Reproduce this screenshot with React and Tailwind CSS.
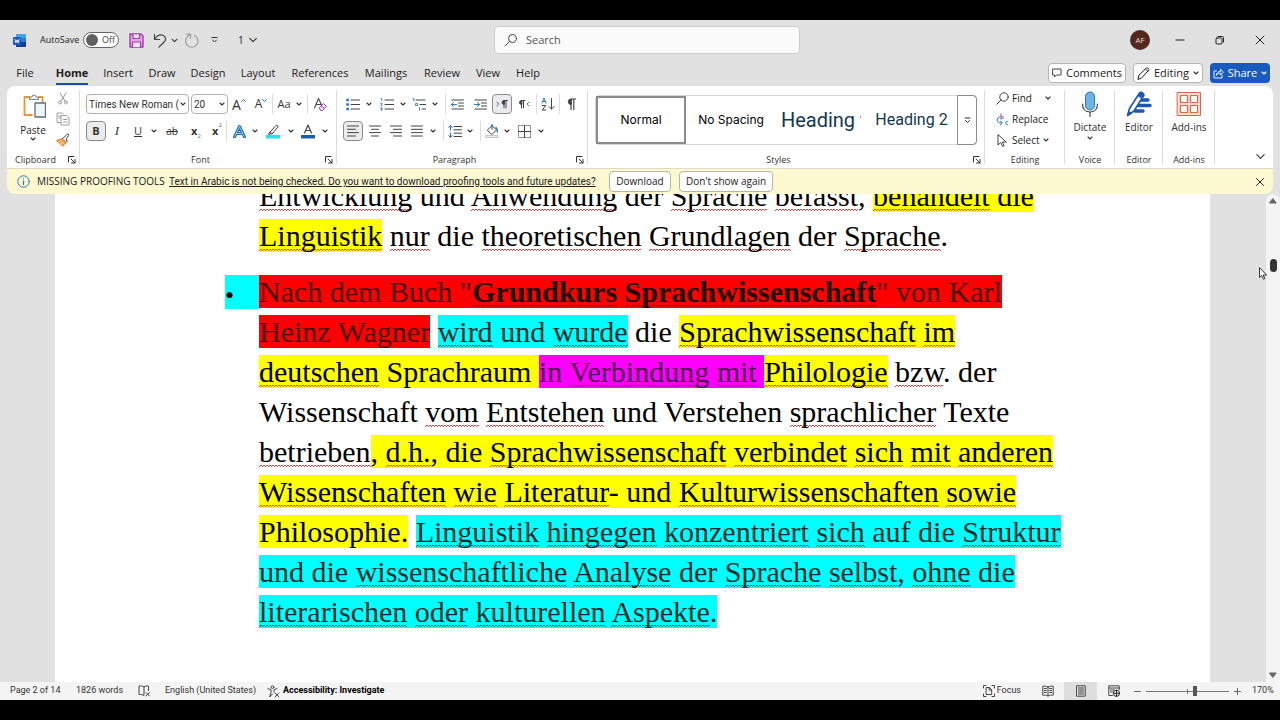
import React from "react";

function Svg({ w = 16, h = w, box, className = "", children }) {
  return (
    <svg
      width={w}
      height={h}
      viewBox={box || `0 0 ${w} ${h}`}
      fill="none"
      stroke="#444"
      strokeWidth="1"
      strokeLinecap="round"
      strokeLinejoin="round"
      aria-hidden="true"
      className={`shrink-0 ${className}`}
    >
      {children}
    </svg>
  );
}

const Chevron = ({ w = 6, color = "#333" }) => (
  <Svg w={w} h={w} box="0 0 6 6">
    <path d="M1 2l2 2 2-2" stroke={color} strokeWidth="1.1" vectorEffect="non-scaling-stroke" />
  </Svg>
);

function Tool({ label, w, on, children }) {
  return (
    <button
      type="button"
      aria-label={label}
      className={`flex h-5 shrink-0 items-center justify-center rounded ${w} ${
        on ? "border border-[#8a8a8a] bg-[#ececec]" : ""
      }`}
    >
      {children}
    </button>
  );
}

const More = ({ label, w }) => (
  <Tool label={label} w={w}>
    <Chevron />
  </Tool>
);

const Rule = () => <span className="h-5 w-px shrink-0 bg-[#dcdcdc]" />;

const Launcher = ({ label }) => (
  <button type="button" aria-label={label} className="absolute right-1 bottom-1">
    <Svg w={8}>
      <path d="M.5 6V.5H6M3 3l4 4M7 3.500V7H3.500" stroke="#333" />
    </Svg>
  </button>
);

function Group({ label, w, launcher, children }) {
  return (
    <section
      aria-label={label}
      className={`relative flex flex-col justify-between pt-2 after:absolute after:right-0 after:top-1 after:h-[74px] after:w-px after:bg-[#dcdcdc] ${w}`}
    >
      {children}
      <span className={`h-4 text-center text-[9px] leading-4 text-[#333] ${launcher ? "pr-4" : ""}`}>{label}</span>
      {launcher && <Launcher label={`${label} settings`} />}
    </section>
  );
}

/* ---------- Title bar ---------- */

function TitleBar() {
  return (
    <header className="grid h-10 shrink-0 grid-cols-[494fr_306fr_480fr] items-center">
      <div className="flex items-center pl-3 text-[9px]">
        <Svg w={15}>
          <rect x="4" y="1" width="10" height="13" rx="1" fill="#2b7cd3" stroke="none" />
          <rect x="4" y="1" width="10" height="4" rx="1" fill="#41a5ee" stroke="none" />
          <path d="M4 9h10v4a1 1 0 0 1-1 1H4z" fill="#103f91" stroke="none" />
          <rect x="1" y="4" width="8" height="8" rx="1" fill="#185abd" stroke="none" />
          <path d="M2.800 6.300l1 3.600 1.200-3 1.200 3 1-3.600" stroke="#fff" strokeWidth=".9" />
        </Svg>
        <label htmlFor="autosave" className="ml-[13px] w-[43px]">
          AutoSave
        </label>
        <span className="relative flex h-4 w-9 items-center rounded-full border border-[#666] bg-white">
          <input id="autosave" type="checkbox" className="absolute inset-0 appearance-none" />
          <span className="ml-[2px] size-3 rounded-full bg-[#616161]" />
          <span className="ml-1 text-[9px] text-[#444]">Off</span>
        </span>
        <button type="button" aria-label="Save" className="ml-[10px]">
          <Svg w={15}>
            <path d="M1 1h11l2 2v11H1z" fill="#e3a5e3" stroke="#a33ba8" strokeWidth="1.400" />
            <path d="M4 1.500v4h6.500v-4M3.500 14V9h8v5" fill="#f2e6f2" stroke="#a33ba8" strokeWidth="1.200" />
          </Svg>
        </button>
        <button type="button" aria-label="Undo" className="ml-[9px]">
          <Svg w={15}>
            <path d="M1.500 1.500v5h5M1.700 6.300C4 2.500 7 1.300 9.800 2.300c3 1 3.600 4.500 1.400 6.700L6 14" strokeWidth="1.200" />
          </Svg>
        </button>
        <button type="button" aria-label="Undo list" className="ml-[3px]">
          <Chevron w={7} />
        </button>
        <button type="button" aria-label="Repeat" className="ml-[6px]">
          <Svg w={15}>
            <path d="M2.500 1.200h4v4M6.300 1.500L4.200 3A6.200 6.200 0 1 0 10.500 2.500" stroke="#a0a0a0" strokeWidth="1.200" />
          </Svg>
        </button>
        <button type="button" aria-label="Customize Quick Access Toolbar" className="ml-3">
          <Svg w={7} h={8}>
            <path d="M1 1.500h5M1.500 4l2 2 2-2" stroke="#333" />
          </Svg>
        </button>
        <button type="button" className="ml-5 flex items-center gap-1 text-[10px]">
          1 <Chevron w={10} />
        </button>
      </div>

      <label className="flex h-7 items-center gap-2 rounded border border-[#cdcdcd] bg-[#fafafa] px-2">
        <Svg w={15}>
          <circle cx="9.500" cy="5.500" r="4" />
          <path d="M6.600 8.400L2 13" />
        </Svg>
        <input
          type="search"
          aria-label="Search"
          placeholder="Search"
          className="w-full min-w-0 bg-transparent text-[11px] outline-none placeholder:text-[#555]"
        />
      </label>

      <div className="flex items-center justify-end pr-[10px]">
        <button
          type="button"
          className="flex size-5 items-center justify-center rounded-full bg-[#54291d] text-[8px] text-[#e9d9d4]"
        >
          AF
        </button>
        <button type="button" aria-label="Minimize" className="ml-5 flex w-5 justify-center">
          <Svg w={10}>
            <path d="M1 5h8" stroke="#222" />
          </Svg>
        </button>
        <button type="button" aria-label="Restore" className="ml-5 flex w-5 justify-center">
          <Svg w={10}>
            <rect x="1" y="3" width="6" height="6" rx="1" stroke="#222" />
            <path d="M3 1.500h4.500a1 1 0 0 1 1 1V7" stroke="#222" />
          </Svg>
        </button>
        <button type="button" aria-label="Close" className="ml-5 flex w-5 justify-center">
          <Svg w={10}>
            <path d="M1 1l8 8M9 1L1 9" stroke="#222" />
          </Svg>
        </button>
      </div>
    </header>
  );
}

/* ---------- Tabs ---------- */

const TABS = [
  ["File", "w-[18px] mr-[6px]"],
  ["Home", "w-8"],
  ["Insert", "w-7"],
  ["Draw", "w-7"],
  ["Design", "w-8"],
  ["Layout", "w-9"],
  ["References", "w-14"],
  ["Mailings", "w-11"],
  ["Review", "w-9"],
  ["View", "w-6"],
  ["Help", "w-6"],
];

function TabRow() {
  return (
    <div className="flex h-[26px] shrink-0 items-center justify-between pr-[10px] pl-4 text-[11px]">
      <nav className="flex gap-4">
        {TABS.map(([name, w]) => (
          <a
            key={name}
            href="#"
            className={`flex justify-center border-b-2 pt-px leading-5 whitespace-nowrap ${w} ${
              name === "Home" ? "border-[#1c4ea1] font-bold" : "border-transparent"
            }`}
          >
            {name}
          </a>
        ))}
      </nav>
      <div className="flex gap-[7px]">
        <button type="button" className="flex h-5 w-[78px] items-center justify-center gap-1 rounded border border-[#b5b5b5] bg-white">
          <Svg w={10}>
            <path d="M1 1h8v6H4.500L2.500 9V7H1z" />
          </Svg>
          Comments
        </button>
        <button type="button" className="flex h-5 w-[70px] items-center justify-center gap-1 rounded border border-[#b5b5b5] bg-white">
          <Svg w={13}>
            <path d="M1 12l1-4 7.500-7c1-.7 3 1 2.300 2.200L4.500 11zM8.500 2l2.500 2.500" stroke="#222" />
          </Svg>
          Editing
          <Chevron />
        </button>
        <button type="button" className="flex h-5 w-[60px] items-center justify-center gap-1 rounded bg-[#185abd] text-white">
          <Svg w={11}>
            <path d="M3.500 3H1v7h8V7.500M3.500 7c.3-2.500 2-3.600 4-3.600V1.200L10.300 4.200 7.500 7V5C6 5 4.500 5.500 3.500 7z" stroke="#fff" strokeWidth=".9" />
          </Svg>
          Share
          <Chevron color="#fff" />
        </button>
      </div>
    </div>
  );
}

/* ---------- Ribbon groups ---------- */

function Clipboard() {
  return (
    <Group label="Clipboard" w="w-[73px]" launcher>
      <div className="flex pl-[10px]">
        <button type="button" className="flex w-8 flex-col items-center text-[10px] leading-3">
          <Svg w={26}>
            <path d="M9 3H4.500v18H12M19 3h3.500v5" stroke="#e8972e" strokeWidth="1.800" />
            <path d="M9.500 5V3H12a2 2 0 0 1 4 0h2.500v2z" fill="#fff" stroke="#777" />
            <rect x="15" y="9" width="10.500" height="14" fill="#f2f5f7" stroke="#5f6f7a" strokeWidth="1.300" />
          </Svg>
          <span className="mt-1">Paste</span>
          <Chevron />
        </button>
        <div className="flex w-7 flex-col items-center gap-[7px]">
          <button type="button" aria-label="Cut" className="-mt-[2px]">
            <Svg w={12} h={13}>
              <path d="M3 .8l5 8.500M9 .8L4 9.300" stroke="#9a9a9a" />
              <circle cx="3" cy="10.500" r="1.500" stroke="#9a9a9a" />
              <circle cx="9" cy="10.500" r="1.500" stroke="#9a9a9a" />
            </Svg>
          </button>
          <button type="button" aria-label="Copy">
            <Svg w={14}>
              <path d="M5 10.500H1V1h5.500l1 1M2.500 4H5M2.500 6H5" stroke="#a0a0a0" />
              <path d="M5.500 3.500h5L13 6v7H5.500zM7.500 7.500h3.500M7.500 10h3.500" stroke="#a0a0a0" fill="#fff" />
            </Svg>
          </button>
          <button type="button" aria-label="Format Painter">
            <Svg w={14}>
              <path d="M1 7.500l6-2 3.500 3.800L7 13z" fill="#f09a3a" stroke="#d87f1e" />
              <path d="M6.500 5.500l2-1.500L11 1.200c1-.8 2.200.3 1.600 1.300L10.500 5.500l.5 3" fill="#fff" />
              <path d="M3 8.500l3 3M5 7.500l3 3.500" stroke="#fff" strokeWidth=".7" />
            </Svg>
          </button>
        </div>
      </div>
    </Group>
  );
}

function Combo({ id, label, value, w }) {
  return (
    <span className={`flex h-5 shrink-0 items-center rounded border border-[#b0b0b0] bg-white pr-[2px] ${w}`}>
      <input
        id={id}
        aria-label={label}
        defaultValue={value}
        className="min-w-0 flex-1 bg-transparent pl-[2px] font-[Roboto,sans-serif] text-[10px] text-[#333] outline-none"
      />
      <button type="button" aria-label={`${label} list`}>
        <Chevron />
      </button>
    </span>
  );
}

function FontGroup() {
  return (
    <Group label="Font" w="w-[257px]" launcher>
      <div className="flex flex-col gap-[7px] pl-[6px] text-[#333]">
        <div className="flex items-center">
          <Combo id="font" label="Font name" value="Times New Roman (" w="mr-[2px] w-[103px]" />
          <Combo id="size" label="Font size" value="20" w="w-[37px]" />
          <Tool label="Increase Font Size" w="w-[22px]">
            <span className="text-[14px]">A</span>
            <Svg w={5} h={10}>
              <path d="M.5 2.500l2-2 2 2" stroke="#2a7ab8" />
            </Svg>
          </Tool>
          <Tool label="Decrease Font Size" w="w-[22px]">
            <span className="text-[12px]">A</span>
            <Svg w={5} h={10}>
              <path d="M.5 .5l2 2 2-2" stroke="#2a7ab8" />
            </Svg>
          </Tool>
          <Rule />
          <Tool label="Change Case" w="w-[22px]">
            <span className="text-[11px]">Aa</span>
          </Tool>
          <span className="mr-1 flex">
            <More label="Change Case list" w="w-2" />
          </span>
          <Rule />
          <Tool label="Clear All Formatting" w="w-6">
            <Svg w={15}>
              <path d="M1.500 11L5.500 1.500 8.500 8M3 7.500h4.500" strokeWidth="1.100" />
              <path d="M6.500 10.500l4-4 3 3-4 4h-1.500z" fill="#f4e4fa" stroke="#9b45b8" />
              <path d="M8.300 8.600l3 3" stroke="#9b45b8" />
            </Svg>
          </Tool>
        </div>
        <div className="flex items-center">
          <Tool label="Bold" w="w-5" on>
            <span className="text-[11px] font-bold">B</span>
          </Tool>
          <Tool label="Italic" w="w-[22px]">
            <span className="font-['Liberation_Serif',serif] text-[13px] italic">I</span>
          </Tool>
          <Tool label="Underline" w="w-5">
            <span className="text-[11px] underline">U</span>
          </Tool>
          <More label="Underline list" w="w-3" />
          <Tool label="Strikethrough" w="w-6">
            <span className="text-[10px] line-through">ab</span>
          </Tool>
          <Tool label="Subscript" w="w-6">
            <span className="text-[11px] font-bold">x</span>
            <span className="self-end text-[6px] text-[#2a7ab8]">2</span>
          </Tool>
          <Tool label="Superscript" w="w-[18px]">
            <span className="text-[11px] font-bold">x</span>
            <span className="self-start text-[6px] text-[#2a7ab8]">2</span>
          </Tool>
          <Rule />
          <Tool label="Text Effects" w="w-6">
            <Svg w={13}>
              <path d="M1.500 12L6.500 1.500 11.500 12M3.500 8.500h6" stroke="#1f6fb5" strokeWidth="3" />
              <path d="M1.500 12L6.500 1.500 11.500 12M3.500 8.500h6" stroke="#b9dcf2" strokeWidth=".8" />
            </Svg>
          </Tool>
          <More label="Text Effects list" w="w-2" />
          <Tool label="Text Highlight Color" w="w-7">
            <Svg w={14} h={15}>
              <path d="M4 8l6-6.500c1-.8 2.500.5 1.800 1.600L6.500 9.500zM4 8l-1.500 2.500 4-1" />
              <rect x="0" y="11" width="14" height="3.500" fill="#2fe0e0" stroke="none" />
            </Svg>
          </Tool>
          <More label="Highlight list" w="w-2" />
          <Tool label="Font Color" w="w-[26px]">
            <Svg w={14} h={15}>
              <path d="M3.500 9L7 1l3.500 8M4.700 6.500h4.600" strokeWidth="1.200" />
              <rect x="0" y="11" width="14" height="3.500" fill="#1a5fa8" stroke="none" />
            </Svg>
          </Tool>
          <More label="Font Color list" w="w-2" />
        </div>
      </div>
    </Group>
  );
}

const B = "#2a7ab8";

function ParagraphGroup() {
  return (
    <Group label="Paragraph" w="w-[251px]" launcher>
      <div className="flex flex-col gap-[7px] pl-[6px]">
        <div className="flex items-center">
          <Tool label="Bullets" w="w-5">
            <Svg w={14} h={13}>
              <path d="M5 2h9M5 6.500h9M5 11h9" />
              <path d="M1.500 2h.1M1.500 6.500h.1M1.500 11h.1" stroke={B} strokeWidth="2.600" strokeLinecap="square" />
            </Svg>
          </Tool>
          <More label="Bullets list" w="w-3" />
          <Tool label="Numbering" w="w-6">
            <Svg w={14} h={13}>
              <path d="M5 2h9M5 6.500h9M5 11h9" />
              <path d="M1 .5h.8v2.500M.8 5.500h1.400L.8 7.500h1.400M.8 9.800h1.300v2.400H.8M1 11h1" stroke={B} strokeWidth=".8" />
            </Svg>
          </Tool>
          <More label="Numbering list" w="w-2" />
          <Tool label="Multilevel List" w="w-6">
            <Svg w={14} h={13}>
              <path d="M4 2h9M8 6.500h6M10 11h4" />
              <path d="M1 .5h.8v2.500M4 5.500h1.500v2H4zM7.500 9.800v2.500" stroke={B} strokeWidth=".9" />
            </Svg>
          </Tool>
          <span className="mr-[6px] flex">
            <More label="Multilevel list options" w="w-2" />
          </span>
          <Rule />
          <Tool label="Decrease Indent" w="w-[22px]">
            <Svg w={13} h={13}>
              <path d="M1 2h11.500M7.500 5h5M7.500 8h5M1 11h11.500" />
              <path d="M5.500 6.500h-5M2.500 4.500l-2 2 2 2" stroke={B} />
            </Svg>
          </Tool>
          <Tool label="Increase Indent" w="w-6">
            <Svg w={13} h={13}>
              <path d="M1 2h11.500M7.500 5h5M7.500 8h5M1 11h11.500" />
              <path d="M.5 6.500h5M3.500 4.500l2 2-2 2" stroke={B} />
            </Svg>
          </Tool>
          <Tool label="Left-to-Right Text Direction" w="w-5" on>
            <Svg w={12} h={12}>
              <path d="M.8 4l2 2-2 2" stroke={B} />
              <path d="M8 10V2.500h3.500M10 10V2.500" />
              <path d="M8 2.500a2 2 0 0 0 0 4z" fill="#444" />
            </Svg>
          </Tool>
          <Tool label="Right-to-Left Text Direction" w="w-6">
            <Svg w={12} h={12}>
              <path d="M11 4L9 6l2 2" stroke={B} />
              <path d="M3.500 10V2.500H7M5.500 10V2.500" />
              <path d="M3.500 2.500a2 2 0 0 0 0 4z" fill="#444" />
            </Svg>
          </Tool>
          <Rule />
          <Tool label="Sort" w="w-[22px]">
            <Svg w={14}>
              <path d="M1 6l2-5 2 5M1.800 4.500h2.400" stroke={B} />
              <path d="M1.200 8.500h3.600l-3.600 4.500h3.600M10.500 1.500V12M8 9.500l2.500 2.700L13 9.500" />
            </Svg>
          </Tool>
          <Rule />
          <Tool label="Show Paragraph Marks" w="w-[22px]">
            <Svg w={10} h={12}>
              <path d="M5 11.500V1h4.500M7.800 11.500V1" strokeWidth="1.200" />
              <path d="M5 1a2.500 2.500 0 0 0 0 5.500z" fill="#444" />
            </Svg>
          </Tool>
        </div>
        <div className="flex items-center">
          <Tool label="Align Left" w="w-5" on>
            <Svg w={12}>
              <path d="M.5 1h11M.5 4.300h8M.5 7.600h11M.5 11h8" />
            </Svg>
          </Tool>
          <Tool label="Center" w="w-6">
            <Svg w={12}>
              <path d="M.5 1h11M2.500 4.300h7M.5 7.600h11M2.500 11h7" />
            </Svg>
          </Tool>
          <Tool label="Align Right" w="w-[18px]">
            <Svg w={12}>
              <path d="M.5 1h11M3.500 4.300h8M.5 7.600h11M3.500 11h8" />
            </Svg>
          </Tool>
          <Tool label="Justify" w="w-6">
            <Svg w={12}>
              <path d="M.5 1h11M.5 4.300h11M.5 7.600h11M.5 11h11" />
            </Svg>
          </Tool>
          <span className="mr-[6px] flex">
            <More label="Justify list" w="w-2" />
          </span>
          <Rule />
          <Tool label="Line Spacing" w="w-[22px]">
            <Svg w={14} h={13}>
              <path d="M6 1.500h8M6 4.800h8M6 8.200h8M6 11.500h8" />
              <path d="M2.500 1v4M.8 2.500l1.700-2 1.700 2M2.500 8v4M.8 10.500l1.700 2 1.700-2" stroke={B} />
            </Svg>
          </Tool>
          <span className="mr-[6px] flex">
            <More label="Line Spacing list" w="w-2" />
          </span>
          <Rule />
          <Tool label="Shading" w="w-[22px]">
            <Svg w={15} h={14}>
              <path d="M2.500 6l4.500-4.500 4.500 4.500L7 10.200z" />
              <path d="M7 5V.8M11 3.500c1 .8 1.500 2.200 1.300 4.500" stroke={B} strokeWidth="1.400" />
              <rect x="1" y="11.500" width="12" height="2" fill="#eee" stroke="#aaa" strokeWidth=".6" />
            </Svg>
          </Tool>
          <More label="Shading list" w="w-2" />
          <Tool label="Borders" w="w-[26px]">
            <Svg w={13}>
              <path d="M.5 .5h12v12H.5z" stroke="#888" strokeDasharray="1.500 1" />
              <path d="M.5 6.500h12M6.500 .5v12" />
            </Svg>
          </Tool>
          <More label="Borders list" w="w-2" />
        </div>
      </div>
    </Group>
  );
}

function StylesGroup() {
  return (
    <Group label="Styles" w="min-w-0 flex-1" launcher>
      <div className="mt-px mr-2 ml-[7px] flex h-[50px] rounded border border-[#d5d5d5] font-['Inter',sans-serif]">
        <button type="button" className="w-[90px] shrink-0 border-2 border-[#8c8c8c] text-[12px] text-black">
          Normal
        </button>
        <button type="button" className="w-[90px] shrink-0 text-[12px] whitespace-nowrap text-black">
          No Spacing
        </button>
        <button
          type="button"
          className="flex w-[90px] shrink-0 items-center justify-center gap-[5px] font-[Roboto,sans-serif] text-[20px] whitespace-nowrap text-[#12384f]"
        >
          Heading
          <span className="mb-[7px] h-[2px] w-px bg-[#7da0b5]" />
        </button>
        <button
          type="button"
          className="min-w-0 flex-1 font-[Roboto,sans-serif] text-[16px] whitespace-nowrap text-[#12384f]"
        >
          Heading 2
        </button>
        <button
          type="button"
          aria-label="More styles"
          className="-my-px -mr-px flex w-5 shrink-0 items-center justify-center rounded-r border border-[#8c8c8c]"
        >
          <Svg w={7} h={7}>
            <path d="M1 1h5M1.500 3.500l2 2 2-2" stroke="#333" />
          </Svg>
        </button>
      </div>
    </Group>
  );
}

function EditingGroup() {
  return (
    <Group label="Editing" w="w-20">
      <div className="-mt-1 flex flex-col gap-[5px] pl-[11px] text-[10px] leading-4">
        <button type="button" className="flex items-center gap-[3px]">
          <Svg w={13}>
            <circle cx="8" cy="5" r="4.200" />
            <path d="M5 8l-4.300 4.300" />
          </Svg>
          Find
          <span className="ml-[10px]">
            <Chevron />
          </span>
        </button>
        <button type="button" className="flex items-center gap-[3px]">
          <Svg w={13}>
            <path d="M5 .8v5M5 3.500c2.800-1.500 3.800 2.300 0 2.300" stroke="#9b45b8" />
            <path d="M11.800 8.500c-3-.9-3 3.600 0 3M3.500 4C.3 4.600.3 9.500 3.500 9.700h2M4.500 8l1.500 1.700L4.500 12" stroke={B} />
          </Svg>
          Replace
        </button>
        <button type="button" className="flex items-center gap-[3px]">
          <Svg w={13}>
            <path d="M2 1v10l2.700-2.500 2 4 1.500-.8-2-3.700H10z" />
          </Svg>
          Select
          <Chevron />
        </button>
      </div>
    </Group>
  );
}

function BigButton({ label, more, children }) {
  return (
    <button type="button" className="-mt-[3px] flex flex-col items-center text-[10px] leading-4 text-[#333]">
      {children}
      <span className="mt-[2px]">{label}</span>
      {more && <Chevron />}
    </button>
  );
}

function Ribbon() {
  return (
    <div className="flex h-[82px] shrink-0 rounded-t-lg bg-white">
      <Clipboard />
      <FontGroup />
      <ParagraphGroup />
      <StylesGroup />
      <EditingGroup />
      <Group label="Voice" w="w-[50px]">
        <BigButton label="Dictate" more>
          <Svg w={18} h={26}>
            <rect x="4.500" y="1" width="9" height="18" rx="4.500" fill="#6db3e8" stroke="#2f74b5" />
            <path d="M1.500 13c0 5 3 8 7.500 8s7.500-3 7.500-8M9 21v4.500" strokeWidth="1.200" />
          </Svg>
        </BigButton>
      </Group>
      <Group label="Editor" w="w-12">
        <BigButton label="Editor">
          <Svg w={26}>
            <path d="M15 9h7M12 14.500h12M9 20h8" stroke="#1d57b4" strokeWidth="3.400" />
            <path d="M1.500 24.500l2-7L13.500 2c1.500-1.500 5 .5 4.200 2.500L8 20z" fill="#fff" stroke="#1d57b4" strokeWidth="1.600" />
            <path d="M12 4.500L14 1.800c1.500-1.200 4.300.7 3.700 2.500L16 7zM1.500 24.500l1.200-4 2.600 1.600z" fill="#1d57b4" stroke="#1d57b4" />
          </Svg>
        </BigButton>
      </Group>
      <Group label="Add-ins" w="w-[52px]">
        <BigButton label="Add-ins">
          <Svg w={26}>
            <rect x="1.500" y="1.500" width="23" height="23" fill="#fbd9cd" stroke="#d9694a" />
            <path d="M4.500 4.500h7v7h-7zM14.500 4.500h7v7h-7zM4.500 14.500h7v7h-7zM14.500 14.500h7v7h-7z" fill="#fff" stroke="#d9694a" strokeWidth="1.200" />
          </Svg>
        </BigButton>
      </Group>
      <div className="flex w-[58px] items-end justify-end pr-[7px] pb-[6px]">
        <button type="button" aria-label="Collapse the Ribbon">
          <Chevron w={11} />
        </button>
      </div>
    </div>
  );
}

function Banner() {
  return (
    <div className="flex h-[26px] shrink-0 items-center rounded-b-lg border-t border-[#dcdcc8] bg-[#fcf8d0] pr-2 pl-[10px] text-[10px] whitespace-nowrap text-[#222]">
      <Svg w={13}>
        <circle cx="6.500" cy="6.500" r="5.700" stroke="#2f74b5" />
        <path d="M6.500 6v3.500M6.500 3.600v.2" stroke="#2f74b5" strokeWidth="1.200" />
      </Svg>
      <span className="ml-[7px] w-[132px]">MISSING PROOFING TOOLS</span>
      <a href="#" className="w-[440px] font-[Roboto,sans-serif] underline">
        Text in Arabic is not being checked. Do you want to download proofing tools and future updates?
      </a>
      <button type="button" className="mr-2 h-[21px] w-[62px] rounded border border-[#b5b5a8] bg-white">
        Download
      </button>
      <button type="button" className="mr-auto h-[21px] w-[94px] rounded border border-[#b5b5a8] bg-white">
        Don't show again
      </button>
      <button type="button" aria-label="Close message">
        <Svg w={10}>
          <path d="M1.500 1.500l7 7M8.500 1.500l-7 7" stroke="#222" />
        </Svg>
      </button>
    </div>
  );
}

/* ---------- Document ---------- */

const SQUIGGLE =
  "bg-[linear-gradient(90deg,var(--sq)_50%,transparent_50%),linear-gradient(90deg,transparent_50%,var(--sq)_50%)] bg-[length:3px_1px] bg-repeat-x [background-position:0_calc(100%-1px),0_calc(100%-2px)]";

const MARKS = {
  none: ["", "[--sq:#d04444]"],
  yellow: ["bg-[#ffff00]", "[--sq:#c86400]"],
  cyan: ["bg-[#00ffff] text-[#002b2b]", "[--sq:#1d6a6a]"],
  red: ["bg-[#ff0000] text-[#4a0000]", "[--sq:#8a0000]"],
  magenta: ["bg-[#ff00ff] text-[#4a004a]", "[--sq:#99109a]"],
};

/* Words between underscores carry a spelling squiggle. */
function Run({ mark = "none", bold, children }) {
  const [fill, line] = MARKS[mark];
  const text = children.split("_").map((part, i) =>
    i % 2 ? (
      <span key={i} className={`${SQUIGGLE} ${line}`}>
        {part}
      </span>
    ) : (
      part
    ),
  );
  return <span className={`${fill} ${bold ? "font-bold text-[#220000]" : ""}`}>{text}</span>;
}

function Document() {
  return (
    <main className="flex min-h-0 flex-1 overflow-hidden bg-[#e1e1e1]">
      <article
        lang="de"
        className="ml-[55px] flex-1 bg-white pl-[204px] font-['Liberation_Serif',serif] text-[30px] leading-10 whitespace-nowrap text-black"
      >
        <p className="-mt-[18px]">
          <Run>{"_Entwicklung_ und _Anwendung_ der _Sprache_ _befasst_, "}</Run>
          <Run mark="yellow">{"_behandelt_ die"}</Run>
          <br />
          <Run mark="yellow">{"_Linguistik_"}</Run>
          <Run>{" _nur_ die _theoretischen_ _Grundlagen_ der _Sprache_."}</Run>
        </p>
        <ul className="mt-4 -ml-[34px]">
          <li className="flex">
            <span className="mt-[3px] h-[34px] w-[34px] bg-[#00ffff] pt-[9px] text-[26px] leading-6">•</span>
            <div>
              <Run mark="red">{'Nach dem Buch "'}</Run>
              <Run mark="red" bold>{"_Grundkurs_ _Sprachwissenschaft_"}</Run>
              <Run mark="red">{'" von Karl'}</Run>
              <br />
              <Run mark="red">{"Heinz Wagner"}</Run> <Run mark="cyan">{"_wird_ und _wurde_"}</Run>
              <Run>{" die "}</Run>
              <Run mark="yellow">{"_Sprachwissenschaft_ _im_"}</Run>
              <br />
              <Run mark="yellow">{"_deutschen_ Sprachraum "}</Run>
              <Run mark="magenta">{"in _Verbindung_ _mit_ "}</Run>
              <Run mark="yellow">{"_Philologie_"}</Run>
              <Run>{" _bzw_. der"}</Run>
              <br />
              <Run>{"Wissenschaft _vom_ _Entstehen_ und Verstehen _sprachlicher_ Texte"}</Run>
              <br />
              <Run>{"_betrieben_"}</Run>
              <Run mark="yellow">{", _d.h._, die _Sprachwissenschaft_ _verbindet_ _sich_ _mit_ _anderen_"}</Run>
              <br />
              <Run mark="yellow">{"_Wissenschaften_ _wie_ _Literatur_- und _Kulturwissenschaften_ _sowie_"}</Run>
              <br />
              <Run mark="yellow">{"Philosophie."}</Run>{" "}
              <Run mark="cyan">{"_Linguistik_ _hingegen_ _konzentriert_ _sich_ auf die _Struktur_"}</Run>
              <br />
              <Run mark="cyan">{"und die _wissenschaftliche_ _Analyse_ der _Sprache_ _selbst_, _ohne_ die"}</Run>
              <br />
              <Run mark="cyan">{"_literarischen_ _oder_ _kulturellen_ _Aspekte_."}</Run>
            </div>
          </li>
        </ul>
      </article>
      <div className="w-14 shrink-0" />
      <div className="relative flex w-[14px] shrink-0 flex-col items-center justify-between rounded-t-lg bg-[#f4f4f4] py-1">
        <Svg w={8} h={6}>
          <path d="M4 .8L7.200 5H.8z" fill="#666" stroke="#666" />
        </Svg>
        <span className="absolute top-[65px] h-[13px] w-[7px] rounded-full bg-[#333]" />
        <Svg w={8} h={6}>
          <path d="M4 5.200L7.200 1H.8z" fill="#666" stroke="#666" />
        </Svg>
        <Svg w={9} h={13} className="absolute top-[73px] right-[13px]">
          <path d="M1.500 1v9.500l2.300-2 1.600 3.700 1.400-.6-1.600-3.600h3z" fill="#fff" stroke="#222" strokeWidth=".9" />
        </Svg>
      </div>
    </main>
  );
}

/* ---------- Status bar ---------- */

function StatusBar() {
  return (
    <footer className="flex h-[18px] shrink-0 items-center bg-[#f4f4f4] pr-2 pl-[10px] font-[Roboto,sans-serif] text-[9px] whitespace-nowrap text-[#333]">
      <span className="w-[66px]">Page 2 of 14</span>
      <span className="w-[62px]">1826 words</span>
      <button type="button" aria-label="Proofing errors" className="w-[27px]">
        <Svg w={12}>
          <path d="M6 2C4.500.8 2.500.8 1 1v8.500c2 0 3.500 0 5 1V2c1.200-1 3-1.200 4.500-1v4.500M8 7.500l3.500 3.500M11.500 7.500L8 11" />
        </Svg>
      </button>
      <span className="w-[102px]">English (United States)</span>
      <button type="button" className="flex items-center gap-[3px] font-bold text-black">
        <Svg w={13}>
          <circle cx="5.500" cy="2.200" r="1.400" />
          <path d="M1 3.500l3 1.300v3L2.500 12 5.500 9M7 7V4.800l3-1.300M8 8l3.800 4M11.800 8L8 12" />
        </Svg>
        Accessibility: Investigate
      </button>
      <button type="button" className="mr-[10px] ml-auto flex items-center gap-[2px]">
        <Svg w={12}>
          <path d="M3 .5H.5V3M.5 9v2.500H3M9 .5h2.500V3M11.500 9v2.500H9M3.500 2.500h3l2.200 2.300v4.700H3.500zM6.200 2.700V5h2.300" />
        </Svg>
        Focus
      </button>
      <button type="button" aria-label="Read Mode" className="flex w-[33px] justify-center">
        <Svg w={12}>
          <path d="M6 2C4 1 2 1 .8 1.200v9C3 10 4.500 10.200 6 11c1.500-.8 3-1 5.200-.8v-9C10 1 8 1 6 2zM6 2v9M2.300 3.500h2M2.300 5.500h2M2.300 7.500h2M7.700 3.500h2M7.700 5.500h2M7.700 7.500h2" />
        </Svg>
      </button>
      <button type="button" aria-label="Print Layout" className="flex h-full w-[33px] items-center justify-center bg-[#dedede]">
        <Svg w={10} h={12}>
          <path d="M.8 .8h8.400v10.400H.8zM2.500 3h5M2.500 5h5M2.500 7h5M2.500 9h5" />
        </Svg>
      </button>
      <button type="button" aria-label="Web Layout" className="flex w-[33px] justify-center">
        <Svg w={12}>
          <path d="M4.500 10.500H.8V.8h10.400v4M.8 3h10.400M2.500 5h4M2.500 7h2" />
          <circle cx="8.500" cy="8.300" r="3.100" fill="#fff" stroke="#222" />
          <path d="M5.500 8.300h6M8.500 5.300v6" stroke="#222" />
        </Svg>
      </button>
      <button type="button" aria-label="Zoom out" className="ml-1">
        <Svg w={7}>
          <path d="M.5 3.500h6" stroke="#666" />
        </Svg>
      </button>
      <span className="relative mx-[5px] flex w-[83px] items-center">
        <span className="absolute left-[41px] h-[5px] w-px bg-[#777]" />
        <input
          type="range"
          aria-label="Zoom"
          min="0"
          max="100"
          defaultValue="59"
          className="h-3 w-full appearance-none bg-[linear-gradient(#777,#777)] bg-[length:100%_1px] bg-center bg-no-repeat [&::-webkit-slider-thumb]:h-[10px] [&::-webkit-slider-thumb]:w-1 [&::-webkit-slider-thumb]:appearance-none [&::-webkit-slider-thumb]:bg-[#555]"
        />
      </span>
      <button type="button" aria-label="Zoom in">
        <Svg w={7}>
          <path d="M.5 3.500h6M3.500 .5v6" stroke="#666" />
        </Svg>
      </button>
      <span className="ml-[11px] w-5">170%</span>
    </footer>
  );
}

export default function App() {
  return (
    <div className="flex h-screen flex-col overflow-hidden bg-black py-5 font-['Open_Sans','Noto_Sans',sans-serif] text-[#222]">
      <div className="shrink-0 bg-[#e1e1e1]">
        <TitleBar />
        <TabRow />
        <div className="px-[7px]">
          <Ribbon />
          <Banner />
        </div>
      </div>
      <Document />
      <StatusBar />
    </div>
  );
}
